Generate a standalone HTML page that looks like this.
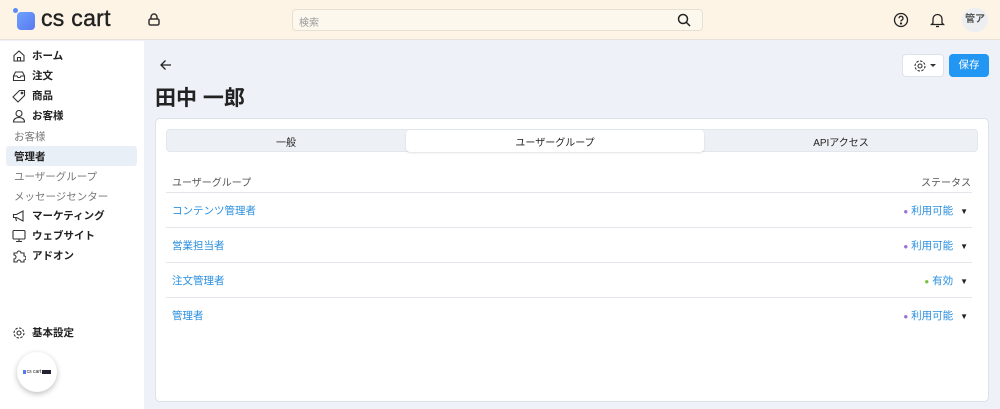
<!DOCTYPE html>
<html><head><meta charset="utf-8"><style>
*{box-sizing:border-box;margin:0;padding:0}
body{width:1000px;height:409px;overflow:hidden;background:#eef2f8;font-family:"Liberation Sans","Noto Sans CJK JP",sans-serif;font-size:11px;color:#222;position:relative}
.top{position:absolute;left:0;top:0;width:1000px;height:40px;background:#fdf4e6;border-bottom:1px solid #e6e2da}
.side{position:absolute;left:0;top:41px;width:144px;height:368px;background:#fff}
.ni{position:absolute;left:12px;font-weight:bold;font-size:10.5px;display:flex;align-items:center;gap:6px}
.sub{position:absolute;left:14px;font-size:10.5px;color:#777}
.ico{width:14px;height:14px}
.card{position:absolute;left:155px;top:118px;width:834px;height:284px;background:#fff;border:1px solid #dde3ea;border-radius:5px}
.row{position:absolute;left:10px;width:806px;border-top:1px solid #e3e7ec}
.lk{position:absolute;left:6px;color:#2a8fde;font-size:10.5px}
.st{position:absolute;right:4px;color:#2a8fde;font-size:10.5px}
</style></head><body>
<div class="top">
 <div style="position:absolute;left:13px;top:8px;width:5px;height:5px;border-radius:50%;background:#5b8cf5"></div>
 <div style="position:absolute;left:17px;top:12px;width:18px;height:18px;border-radius:4px;background:linear-gradient(135deg,#6ea2ff,#5a78f0)"></div>
 <div style="position:absolute;left:41px;top:5px;font-size:23px;color:#222;letter-spacing:0.3px;-webkit-text-stroke:0.4px #222">cs cart</div>
 <svg style="position:absolute;left:147px;top:12px" width="14" height="15" viewBox="0 0 14 15" fill="none" stroke="#333" stroke-width="1.5"><rect x="2" y="7" width="10" height="6" rx="1.5"/><path d="M4 7V5a3 3 0 0 1 6 0v2"/></svg>
 <div style="position:absolute;left:292px;top:9px;width:411px;height:22px;background:#fdf8ee;border:1px solid #e6e0d4;border-radius:4px;font-size:10px;color:#999;padding:4px 6px">検索</div>
 <svg style="position:absolute;left:677px;top:13px" width="14" height="14" viewBox="0 0 14 14" fill="none" stroke="#222" stroke-width="1.5"><circle cx="6" cy="6" r="4.5"/><path d="M9.5 9.5L13 13"/></svg>
 <svg style="position:absolute;left:893px;top:12px" width="16" height="16" viewBox="0 0 16 16" fill="none" stroke="#222" stroke-width="1.3"><circle cx="8" cy="8" r="6.5"/><path d="M6 6.3a2 2 0 1 1 2.5 1.9c-.5.2-.5.6-.5 1.3"/><circle cx="8" cy="11.5" r=".5" fill="#222"/></svg>
 <svg style="position:absolute;left:930px;top:12px" width="15" height="16" viewBox="0 0 15 16" fill="none" stroke="#222" stroke-width="1.3"><path d="M3 11V7a4.5 4.5 0 0 1 9 0v4l1.5 1.5h-12z"/><path d="M6 14.5h3"/></svg>
 <div style="position:absolute;left:962px;top:8px;width:26px;height:24px;border-radius:50%;background:#eceef2;font-size:10px;font-weight:bold;color:#555;text-align:center;line-height:24px">管ア</div>
</div>
<div class="side">
 <div class="ni" style="top:7px"><svg class="ico" viewBox="0 0 14 14" fill="none" stroke="#333" stroke-width="1.1"><path d="M2 6.5L7 2l5 4.5V12H2z"/><path d="M5.5 12V8.5h3V12"/></svg>ホーム</div>
 <div class="ni" style="top:27px"><svg class="ico" viewBox="0 0 14 14" fill="none" stroke="#333" stroke-width="1.1"><path d="M1.5 7l2-4h7l2 4v4.5h-11z"/><path d="M1.5 7h3.5l1 1.5h2L9 7h3.5"/></svg>注文</div>
 <div class="ni" style="top:47px"><svg class="ico" viewBox="0 0 14 14" fill="none" stroke="#333" stroke-width="1.1"><path d="M7.5 1.5h5v5L6 13 1 8z"/><circle cx="10" cy="4" r=".8"/></svg>商品</div>
 <div class="ni" style="top:67px"><svg class="ico" viewBox="0 0 14 14" fill="none" stroke="#333" stroke-width="1.1"><circle cx="7" cy="4.5" r="3"/><path d="M1.5 13c0-3 2.5-4.5 5.5-4.5s5.5 1.5 5.5 4.5z"/></svg>お客様</div>
 <div class="sub" style="top:88px">お客様</div>
 <div style="position:absolute;left:6px;top:105px;width:131px;height:20px;background:#e9eff7;border-radius:3px"></div>
 <div class="sub" style="top:108px;color:#222;font-weight:bold">管理者</div>
 <div class="sub" style="top:128px">ユーザーグループ</div>
 <div class="sub" style="top:148px">メッセージセンター</div>
 <div class="ni" style="top:167px"><svg class="ico" viewBox="0 0 14 14" fill="none" stroke="#333" stroke-width="1.1"><path d="M1.5 5.5h3L11 2v10L4.5 8.5h-3z"/><path d="M3.5 8.5l1 3.5"/></svg>マーケティング</div>
 <div class="ni" style="top:187px"><svg class="ico" viewBox="0 0 14 14" fill="none" stroke="#333" stroke-width="1.1"><rect x="1" y="1.5" width="12" height="8.5" rx="1"/><path d="M7 10v2.5M4 12.5h6"/></svg>ウェブサイト</div>
 <div class="ni" style="top:207px"><svg class="ico" viewBox="0 0 14 14" fill="none" stroke="#333" stroke-width="1.1"><path d="M2 4h3a2 2 0 1 1 4 0h3v3a2 2 0 1 1 0 4v2H9a2 2 0 1 0-4 0H2v-3a2 2 0 1 0 0-4z"/></svg>アドオン</div>
 <div class="ni" style="top:284px"><svg class="ico" viewBox="0 0 14 14" fill="none" stroke="#333" stroke-width="1.1"><circle cx="7" cy="7" r="2"/><circle cx="7" cy="7" r="5" stroke-dasharray="2.5 1.4"/></svg>基本設定</div>
 <div style="position:absolute;left:17px;top:311px;width:40px;height:40px;border-radius:50%;background:#fff;box-shadow:0 2px 6px rgba(0,0,0,.25);font-size:5px;display:flex;align-items:center;justify-content:center;gap:1px"><span style="width:3px;height:4px;background:#5a78f0;display:inline-block"></span>cs cart<span style="width:9px;height:4px;background:#223;display:inline-block"></span></div>
</div>
<svg style="position:absolute;left:159px;top:59px" width="13" height="12" viewBox="0 0 13 12" fill="none" stroke="#222" stroke-width="1.3"><path d="M12 6H2M6.5 1.5L2 6l4.5 4.5"/></svg>
<div style="position:absolute;left:155px;top:82px;font-size:21px;font-weight:bold;color:#222">田中 一郎</div>
<div style="position:absolute;left:902px;top:54px;width:42px;height:23px;background:#fff;border:1px solid #dde3ea;border-radius:4px"><svg style="position:absolute;left:10px;top:4px" width="14" height="14" viewBox="0 0 14 14" fill="none" stroke="#333" stroke-width="1.1"><circle cx="7" cy="7" r="2"/><circle cx="7" cy="7" r="5" stroke-dasharray="2.5 1.4"/></svg><span style="position:absolute;left:27px;top:9px;border:3px solid transparent;border-top:3.5px solid #333"></span></div>
<div style="position:absolute;left:949px;top:54px;width:40px;height:23px;background:#2196f3;border-radius:4px;color:#fff;font-size:10.5px;text-align:center;line-height:23px">保存</div>
<div class="card">
 <div style="position:absolute;left:10px;top:10px;width:812px;height:23px;background:#edf1f6;border:1px solid #e2e7ee;border-radius:4px;font-size:10px"></div>
 <div style="position:absolute;left:250px;top:11px;width:298px;height:22px;background:#fff;border-radius:4px;box-shadow:0 1px 2px rgba(0,0,0,.12)"></div>
 <div style="position:absolute;left:10px;top:15px;width:240px;text-align:center;font-size:10px">一般</div>
 <div style="position:absolute;left:250px;top:15px;width:298px;text-align:center;font-size:10px">ユーザーグループ</div>
 <div style="position:absolute;left:548px;top:15px;width:274px;text-align:center;font-size:10px">APIアクセス</div>
 <div style="position:absolute;left:16px;top:55px;font-size:10px;color:#555">ユーザーグループ</div>
 <div style="position:absolute;right:17px;top:55px;font-size:10px;color:#555">ステータス</div>
 <div class="row" style="top:73px"><div class="lk" style="top:10px">コンテンツ管理者</div><div class="st" style="top:10px"><span style="color:#9b6fd6;font-size:8px">●</span> 利用可能 <span style="color:#222;font-size:8px;margin-left:4px">▼</span></div></div>
 <div class="row" style="top:108px"><div class="lk" style="top:10px">営業担当者</div><div class="st" style="top:10px"><span style="color:#9b6fd6;font-size:8px">●</span> 利用可能 <span style="color:#222;font-size:8px;margin-left:4px">▼</span></div></div>
 <div class="row" style="top:143px"><div class="lk" style="top:10px">注文管理者</div><div class="st" style="top:10px"><span style="color:#7cc043;font-size:8px">●</span> 有効 <span style="color:#222;font-size:8px;margin-left:4px">▼</span></div></div>
 <div class="row" style="top:178px"><div class="lk" style="top:10px">管理者</div><div class="st" style="top:10px"><span style="color:#9b6fd6;font-size:8px">●</span> 利用可能 <span style="color:#222;font-size:8px;margin-left:4px">▼</span></div></div>
</div>
</body></html>
